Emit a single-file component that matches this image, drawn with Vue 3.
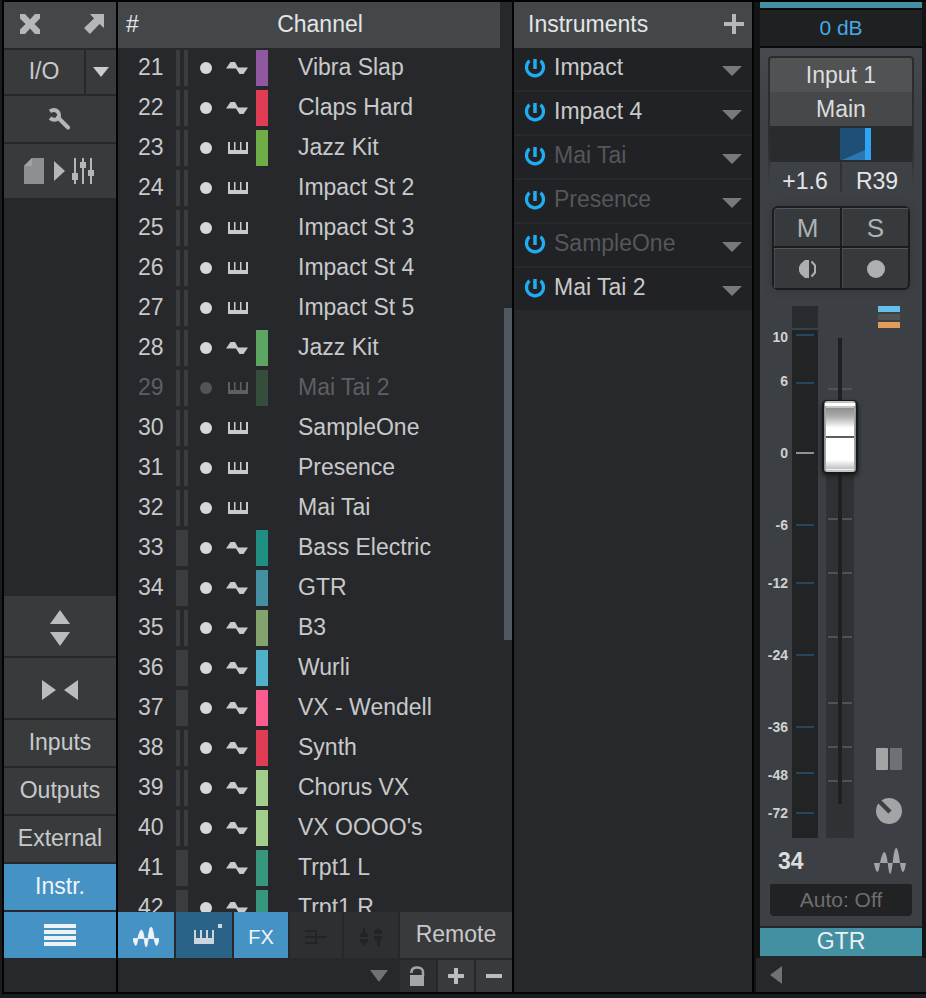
<script setup>
import { ref } from 'vue'

const fader = ref(795)
const pan = ref(39)

// [number, name, icon, colour, stereo, dimmed]
const channels = [
  [21, 'Vibra Slap', 'wave', '#9158a2', true],
  [22, 'Claps Hard', 'wave', '#e03d54', true],
  [23, 'Jazz Kit', 'keys', '#6fae46', true],
  [24, 'Impact St 2', 'keys', null, true],
  [25, 'Impact St 3', 'keys', null, true],
  [26, 'Impact St 4', 'keys', null, true],
  [27, 'Impact St 5', 'keys', null, true],
  [28, 'Jazz Kit', 'wave', '#5ca562', true],
  [29, 'Mai Tai 2', 'keys', '#364d3c', true, true],
  [30, 'SampleOne', 'keys', null, true],
  [31, 'Presence', 'keys', null, true],
  [32, 'Mai Tai', 'keys', null, true],
  [33, 'Bass Electric', 'wave', '#218e84', false],
  [34, 'GTR', 'wave', '#4290a2', false],
  [35, 'B3', 'wave', '#83a26d', true],
  [36, 'Wurli', 'wave', '#4fb0c9', false],
  [37, 'VX - Wendell', 'wave', '#fb5c8e', false],
  [38, 'Synth', 'wave', '#e03d54', true],
  [39, 'Chorus VX', 'wave', '#a1cf8b', true],
  [40, "VX OOOO's", 'wave', '#a1cf8b', true],
  [41, 'Trpt1 L', 'wave', '#36967e', false],
  [42, 'Trpt1 R', 'wave', '#36967e', false],
].map(([num, name, icon, color, stereo, dim]) => ({ num, name, icon, color, stereo, dim }))

const instruments = [
  { name: 'Impact' },
  { name: 'Impact 4' },
  { name: 'Mai Tai', off: true },
  { name: 'Presence', off: true },
  { name: 'SampleOne', off: true },
  { name: 'Mai Tai 2' },
]

const wavePath =
  'M0 15H6C5.500 19.500 4.500 24 3.500 24S.8 20 0 15ZM6 15C7.500 8 9 4 10.300 4S13 8 13.700 15ZM13.700 15H18.700C18 20 17.200 26 16.200 26S14.300 20 13.700 15ZM18.700 15C19.500 6 20.800 0 22.200 0S25 6 26 15ZM26 15H32C31.200 20 30.200 24 29 24S26.800 20 26 15Z'

// Positions along the meter, in percent of its height
const pct = (y) => ((y / 532) * 100).toFixed(3) + '%'
const scale = [
  ['10', 31, 29], ['6', 75, 77], ['0', 147, 147], ['-6', 219, 219], ['-12', 277, 277],
  ['-24', 349, 349], ['-36', 421, 421], ['-48', 469, 467], ['-72', 507, 507],
].map(([label, text, mark]) => ({ label, text: pct(text), mark: pct(mark) }))
const ticks = [83, 213, 267, 331, 397, 441, 475].map(pct)
</script>

<template>
  <main class="mixer">
    <nav class="side" aria-label="Console">
      <div class="side-head">
        <button aria-label="Close">
          <svg width="20" height="20" viewBox="0 0 20 20"><path d="M0 0H5L10 5.500 15 0H20V4.500L14.500 10 20 15.500V20H15L10 14.500 5 20H0V15.500L5.500 10 0 4.500Z" fill="#b5b7b8" /></svg>
        </button>
        <button aria-label="Detach">
          <svg width="20" height="20" viewBox="0 0 20 20"><path d="M6 0H20V14L15.500 10 6 20 0 14 10 4.500Z" fill="#b5b7b8" /></svg>
        </button>
      </div>
      <div class="split">
        <button class="btn txt io">I/O</button>
        <button class="btn io-menu" aria-label="I/O menu">
          <svg width="16" height="10" viewBox="0 0 16 10"><path d="M0 0H16L8 10Z" fill="#cbccce" /></svg>
        </button>
      </div>
      <button class="btn" aria-label="Options">
        <svg width="22" height="22" viewBox="0 0 22 22" fill="none" stroke="#b5b6b7" stroke-width="4">
          <path d="M1 3.500C3.500 1.500 6.500 1.500 8.500 3.500S10.500 8.500 8.800 10.300 4 12.500 1 10" />
          <path d="M9 9.500 19 19.500" stroke-linecap="round" />
        </svg>
      </button>
      <button class="btn scene" aria-label="Scenes">
        <svg width="72" height="28" viewBox="0 0 72 28">
          <path d="M0 9 8 1H20V27H0Z" fill="#8d8f91" />
          <path d="M0 9 8 1V9Z" fill="#a2a3a4" />
          <path d="M30 4 41 14 30 24Z" fill="#b5b6b7" />
          <path d="M50 1h2v15h2v7h-2v4h-2v-4h-2v-7h2ZM58 1h2v4h2v6h-2v16h-2V11h-2V5h2ZM66 1h2v12h2v6h-2v8h-2v-8h-2v-6h2Z" fill="#b5b6b7" />
        </svg>
      </button>
      <div class="spacer"></div>
      <button class="btn tall" aria-label="Fold vertically">
        <svg width="20" height="36" viewBox="0 0 20 36"><path d="M10 0 20 14H0ZM0 22H20L10 36Z" fill="#bbbcbd" /></svg>
      </button>
      <button class="btn tall" aria-label="Narrow">
        <svg width="36" height="20" viewBox="0 0 36 20"><path d="M0 0 14 10 0 20ZM36 0V20L22 10Z" fill="#bbbcbd" /></svg>
      </button>
      <button class="btn txt">Inputs</button>
      <button class="btn txt">Outputs</button>
      <button class="btn txt">External</button>
      <button class="btn txt on">Instr.</button>
      <button class="btn on" aria-label="Channel list">
        <svg width="32" height="22" viewBox="0 0 32 22"><path d="M0 0H32V4H0ZM0 6H32V10H0ZM0 12H32V16H0ZM0 18H32V22H0Z" fill="#eef2f5" /></svg>
      </button>
      <div class="side-foot"></div>
    </nav>

    <section class="list">
      <div class="list-body">
        <div class="rows">
          <table>
            <colgroup>
              <col class="w-num" /><col class="w-meter" /><col class="w-dot" /><col class="w-icon" /><col class="w-color" /><col />
            </colgroup>
            <thead>
              <tr><th class="c-num">#</th><th class="c-title" colspan="5">Channel</th></tr>
            </thead>
            <tbody>
              <tr v-for="c in channels" :key="c.num" :class="{ dim: c.dim }">
                <td class="c-num">{{ c.num }}</td>
                <td><span :class="['lanes', { mono: !c.stereo }]"></span></td>
                <td><span class="dot"></span></td>
                <td>
                  <svg v-if="c.icon === 'wave'" width="22" height="12" viewBox="0 0 22 12"><path d="M0 6.500 4.500 0H9L12 5.500H22L17.500 12H13.500L10 6.500Z" fill="currentColor" /></svg>
                  <svg v-else class="keys" width="20" height="12" viewBox="0 0 20 12"><path d="M0 0H2V8H6V0H7.500V8H12V0H13.500V8H18V0H20V12H0Z" fill="currentColor" /></svg>
                </td>
                <td><span class="chip" :style="{ background: c.color || 'transparent' }"></span></td>
                <td class="c-name">{{ c.name }}</td>
              </tr>
            </tbody>
          </table>
        </div>
        <div class="scroll"><span class="thumb"></span></div>
      </div>
      <div class="tools">
        <button class="btn on t56 low" aria-label="Audio tracks">
          <svg width="26" height="20" viewBox="0 0 32 26" preserveAspectRatio="none"><path :d="wavePath" fill="#f1f4f6" stroke="#f1f4f6" /></svg>
        </button>
        <button class="btn deep t56" aria-label="Instrument tracks">
          <svg width="36" height="24" viewBox="-8 0 36 24"><path d="M0 7H2V15H6V7H8V15H12V7H14V15H18V7H20V21H0ZM24 1H28V5H24Z" fill="#cbd6dd" /></svg>
        </button>
        <button class="btn on t54 low fx">FX</button>
        <button class="btn off t52 low" aria-label="Buses">
          <svg width="22" height="16" viewBox="0 0 22 16"><path d="M0 2H11V14H0M0 8H22" fill="none" stroke="#222427" stroke-width="2" /></svg>
        </button>
        <button class="btn off t54 low" aria-label="VCA">
          <svg width="22" height="18" viewBox="0 0 22 18"><path d="M3 0h2v4l3 2v3H0V6l3-2ZM0 11h8v3l-3 2v2H3v-2l-3-2ZM17 0h2v2h3v4h-8V2h3ZM14 8h8v3l-2 2v5h-3v-5l-3-2Z" fill="#222427" /></svg>
        </button>
        <button class="btn txt remote">Remote</button>
      </div>
      <div class="foot">
        <button class="plain" aria-label="More">
          <svg width="18" height="12" viewBox="0 0 18 12"><path d="M0 0H18L9 12Z" fill="#707275" /></svg>
        </button>
        <button class="btn off t36" aria-label="Lock">
          <svg width="16" height="20" viewBox="0 0 16 20"><path d="M0 9H14V20H0Z" fill="#a5a6a7" /><path d="M1.500 7V5.500C2 2 4 1.500 7 1.500S13 3 13 6V10" fill="none" stroke="#a5a6a7" stroke-width="2.500" /></svg>
        </button>
        <button class="btn t36" aria-label="Add">
          <svg width="16" height="16" viewBox="0 0 16 16"><path d="M6 0H10V6H16V10H10V16H6V10H0V6H6Z" fill="#bcbdbe" /></svg>
        </button>
        <button class="btn t36" aria-label="Remove">
          <svg width="16" height="4" viewBox="0 0 16 4"><path d="M0 0H16V4H0Z" fill="#bcbdbe" /></svg>
        </button>
      </div>
    </section>

    <section class="instruments">
      <header>
        <h2>Instruments</h2>
        <button class="plain" aria-label="Add instrument">
          <svg width="20" height="20" viewBox="0 0 20 20"><path d="M8 0H12V8H20V12H12V20H8V12H0V8H8Z" fill="#b5b7b8" /></svg>
        </button>
      </header>
      <ul>
        <li v-for="i in instruments" :key="i.name" :class="{ off: i.off }">
          <button class="plain power" :aria-label="'Power ' + i.name">
            <svg width="22" height="20" viewBox="0 0 22 20">
              <path d="M5.500 2.800A8.500 8.500 0 1 0 16.500 2.800" fill="none" stroke="#20adf2" stroke-width="3.200" />
              <path d="M11 1V11" stroke="#20adf2" stroke-width="3.500" />
            </svg>
          </button>
          <span class="iname">{{ i.name }}</span>
          <button class="plain arrow" :aria-label="'Menu ' + i.name">
            <svg width="20" height="10" viewBox="0 0 20 10"><path d="M0 0H20L10 10Z" fill="#77797a" /></svg>
          </button>
        </li>
      </ul>
    </section>

    <section class="strip-col">
      <div class="strip-wrap">
        <article class="strip">
          <div class="cap"></div>
          <div class="peak">0 dB</div>
          <div class="body">
            <div class="routing">
              <button class="route in">Input 1</button>
              <button class="route out">Main</button>
              <div class="pan">
                <svg viewBox="0 0 142 32" preserveAspectRatio="none" aria-hidden="true">
                  <path d="M70 0H95V32H70Z" fill="#1f4f74" /><path d="M72 32 95 22V32Z" fill="#2b78b1" />
                </svg>
                <input v-model="pan" type="range" min="-100" max="100" aria-label="Pan" />
              </div>
              <div class="values"><span>+1.6</span><span>R39</span></div>
            </div>
            <div class="pads">
              <button>M</button>
              <button>S</button>
              <button aria-label="Monitor">
                <svg width="18" height="18" viewBox="0 0 18 18"><path d="M10 0V18H6L1.500 14 0 11V7L1.500 4 6 0Z" fill="#adb0b3" /><path d="M12.500 1.500 16 5.500V12.500L12.500 16.500" fill="none" stroke="#adb0b3" stroke-width="2" /></svg>
              </button>
              <button aria-label="Record">
                <svg width="18" height="18" viewBox="0 0 18 18"><circle cx="9" cy="9" r="9" fill="#adb0b3" /></svg>
              </button>
            </div>
            <div class="level">
              <div class="labels"><span v-for="s in scale" :key="s.label" :style="{ top: s.text }">{{ s.label }}</span></div>
              <div class="meter">
                <div class="clip"></div>
                <div class="bar"></div>
                <i v-for="s in scale" :key="s.label" :class="{ zero: s.label === '0' }" :style="{ top: s.mark }"></i>
              </div>
              <div class="fader">
                <div class="groove"></div>
                <i v-for="t in ticks" :key="t" :style="{ top: t }"></i>
                <div class="slot"></div>
                <input v-model="fader" type="range" min="0" max="1000" aria-label="Volume" />
              </div>
              <div class="icons">
                <svg width="22" height="22" viewBox="0 0 22 22"><path d="M0 0H22V6H0Z" fill="#66beed" /><path d="M0 8H22V14H0Z" fill="#505254" /><path d="M0 16H22V22H0Z" fill="#e09d58" /></svg>
                <span class="spacer"></span>
                <svg width="26" height="22" viewBox="0 0 26 22"><rect width="12" height="22" rx="1" fill="#a2a4a6" /><rect x="14" width="12" height="22" rx="1" fill="#6e7175" /></svg>
                <svg class="knob" width="26" height="26" viewBox="0 0 26 26"><circle cx="13" cy="13" r="13" fill="#a2a4a6" /><path d="M3 3 14 14" stroke="#3c3f44" stroke-width="4.500" /></svg>
              </div>
            </div>
            <div class="ident">
              <strong>34</strong>
              <svg width="32" height="26" viewBox="0 0 32 26"><path :d="wavePath" fill="#a2a4a6" /></svg>
            </div>
            <button class="auto">Auto: Off</button>
          </div>
          <div class="name">GTR</div>
        </article>
      </div>
      <footer>
        <button class="plain" aria-label="Scroll left">
          <svg width="12" height="18" viewBox="0 0 12 18"><path d="M12 0V18L0 9Z" fill="#707275" /></svg>
        </button>
      </footer>
    </section>
  </main>
</template>

<style>
body {
  margin: 0;
  background: #1b1c1f;
}
</style>

<style scoped>
* {
  box-sizing: border-box;
}
.mixer {
  height: calc(100vh - 4px);
  min-height: 800px;
  display: grid;
  grid-template-columns: 112px minmax(340px, 394fr) minmax(200px, 238fr) 172px;
  gap: 2px;
  padding: 2px 0 2px 2px;
  margin-left: 2px;
  background: #020303;
  color: #c8c9ca;
  font: 23px/26px "Liberation Sans", Arial, sans-serif;
}
svg {
  display: block;
}
button {
  border: 0;
  padding: 0;
  margin: 0;
  background: none;
  color: inherit;
  font: inherit;
  display: flex;
  align-items: center;
  justify-content: center;
}
.spacer {
  flex: 1;
}
.btn {
  height: 46px;
  background: #393a3c;
  flex: none;
}
.btn.on {
  background: #4592c5;
  color: #f1f4f6;
}
.btn.deep {
  background: #2a6288;
}
.btn.off {
  background: #2d3032;
}
.txt {
  padding-bottom: 2px;
}

.side {
  background: #27282c;
  display: flex;
  flex-direction: column;
  gap: 2px;
}
.side-head {
  height: 46px;
  background: #434749;
  display: flex;
  justify-content: space-between;
  padding: 0 12px 2px 16px;
}
.split {
  display: flex;
  gap: 2px;
}
.io {
  flex: 1;
  height: 44px;
}
.io-menu {
  width: 30px;
  height: 44px;
}
.scene {
  height: 54px;
}
.tall {
  height: 60px;
  padding-top: 4px;
}
.side-foot {
  height: 32px;
}

.list {
  background: #27282c;
  display: flex;
  flex-direction: column;
  min-height: 0;
}
.list-body {
  flex: 1;
  min-height: 0;
  display: flex;
}
.rows {
  flex: 1;
  overflow: hidden;
}
table {
  width: 100%;
  border-collapse: collapse;
  table-layout: fixed;
}
th {
  height: 46px;
  padding: 0 0 2px;
  background: #434749;
  color: #e4e5e6;
  font-weight: 400;
  text-align: center;
}
td {
  height: 40px;
  padding: 0;
  white-space: nowrap;
}
.w-num {
  width: 58px;
}
.w-meter {
  width: 20px;
}
.w-dot,
.w-icon {
  width: 30px;
}
.w-color {
  width: 42px;
}
.c-num {
  padding: 0 0 2px 20px;
  text-align: left;
}
th.c-num {
  padding-left: 8px;
}
th.c-title {
  padding-right: 36px;
}
.c-name {
  padding-bottom: 2px;
}
.lanes {
  display: block;
  width: 12px;
  height: 36px;
  border: solid #3b3c40;
  border-width: 0 4px;
}
.mono {
  background: #3b3c40;
}
.dot {
  display: block;
  width: 12px;
  height: 12px;
  margin-left: 4px;
  border-radius: 50%;
  background: #d6d7d8;
}
.keys {
  margin-left: 2px;
}
.chip {
  display: block;
  width: 12px;
  height: 36px;
}
.dim {
  color: #5e5f62;
}
.dim .dot {
  background: #535457;
}
.scroll {
  width: 12px;
  padding-left: 4px;
  display: grid;
  grid-template-rows: 306fr 332fr 272fr;
}
.thumb {
  grid-row: 2;
  background: #525860;
}
.tools,
.foot {
  display: flex;
  gap: 2px;
}
.foot {
  padding-top: 2px;
  justify-content: flex-end;
}
.foot .btn {
  height: 32px;
}
.foot .plain {
  margin-right: 10px;
}
.t36 {
  width: 36px;
}
.t52 {
  width: 52px;
}
.t54 {
  width: 54px;
}
.t56 {
  width: 56px;
}
.low {
  padding-top: 4px;
}
.fx {
  font-size: 20px;
}
.remote {
  flex: 1;
}

.instruments {
  background: #27282c;
}
.instruments header {
  height: 46px;
  padding: 0 8px 2px 14px;
  display: flex;
  justify-content: space-between;
  align-items: center;
  background: #434749;
}
h2 {
  margin: 0;
  font: inherit;
  color: #e4e5e6;
}
ul {
  list-style: none;
  margin: 0;
  padding: 0;
}
li {
  height: 44px;
  display: flex;
  align-items: center;
  padding: 0 10px 4px;
  border-bottom: 2px solid #27292c;
  background: #212225;
}
.iname {
  flex: 1;
  padding-left: 8px;
}
.off .iname {
  color: #555759;
}
.power {
  padding-top: 2px;
}
.arrow {
  padding-top: 8px;
}

.strip-col {
  display: flex;
  flex-direction: column;
  background: #131416;
}
.strip-wrap {
  flex: 1;
  display: flex;
  padding: 0 4px 0 6px;
}
.strip {
  flex: 1;
  display: flex;
  flex-direction: column;
}
.cap {
  height: 6px;
  background: #4290a2;
}
.peak {
  height: 40px;
  padding-top: 4px;
  border: solid #090a0b;
  border-width: 2px 0;
  background: #1f2022;
  color: #46a9e4;
  font-size: 21px;
  line-height: 28px;
  text-align: center;
}
.body {
  flex: 1;
  display: flex;
  flex-direction: column;
  padding: 8px 8px 10px;
  background: linear-gradient(#464a4e, #3e4146 60px, #3c3f44 300px);
}
.routing {
  padding: 2px 2px 0;
  border-radius: 4px 4px 0 0;
  background: linear-gradient(#2a2c2e, #2c2f32 90px, #3d4045 130px);
}
.route {
  width: 100%;
  height: 34px;
  color: #dcddde;
}
.in {
  background: #505254;
  border-radius: 2px 2px 0 0;
}
.out {
  background: #474849;
}
.pan {
  height: 36px;
  padding: 2px 0;
  display: grid;
  background: #282c2f;
}
.pan > * {
  grid-area: 1 / 1;
  width: 100%;
  height: 32px;
}
input[type='range'] {
  appearance: none;
  margin: 0;
  background: transparent;
}
.pan input::-webkit-slider-thumb {
  appearance: none;
  width: 6px;
  height: 32px;
  background: #31a3f3;
}
.values {
  display: grid;
  grid-template-columns: 1fr 1fr;
  gap: 2px;
  background: linear-gradient(#2e3134, #303336);
  height: 30px;
  color: #e4e5e6;
}
.values span {
  background: #3d4045;
  text-align: center;
  padding-top: 6px;
}
.pads {
  display: grid;
  grid-template-columns: 1fr 1fr;
  grid-template-rows: 38px 40px;
  gap: 2px;
  margin: 14px 4px 16px;
  padding: 2px;
  border-radius: 6px;
  background: #1a1c1e;
  box-shadow: 0 0 8px #33363a;
}
.pads button {
  background: #363a3d;
  border-top: 1px solid #54575a;
  border-left: 1px solid #4a4d50;
  color: #adb0b3;
  font-size: 26px;
}
.pads button:first-child {
  border-top-left-radius: 4px;
}
.pads button:last-child {
  border-bottom-right-radius: 4px;
}
.level {
  flex: 1;
  display: flex;
}
.labels {
  position: relative;
  width: 20px;
  margin-right: 4px;
}
.labels span {
  position: absolute;
  right: 0;
  transform: translateY(-50%);
  font: bold 14px/16px "Liberation Sans", Arial, sans-serif;
  color: #cfd1d2;
}
.meter {
  position: relative;
  width: 26px;
  display: flex;
  flex-direction: column;
  gap: 2px;
}
.clip {
  height: 22px;
  background: #292c2e;
}
.bar {
  flex: 1;
  background: #222325;
}
i {
  position: absolute;
  left: 4px;
  width: 18px;
  height: 2px;
  margin-top: -1px;
  background: #234761;
}
.zero {
  background: #8594a0;
}
.fader {
  position: relative;
  width: 36px;
  margin-left: 4px;
  display: grid;
  grid-template-columns: 4px 12px 4px 12px 4px;
  grid-template-rows: 32fr 99fr 367fr 34fr;
}
.groove {
  grid-area: 3 / 2 / 5 / 5;
  background: #2f3235;
}
.slot {
  grid-area: 2 / 3 / 4 / 4;
  background: #1f2022;
  position: relative;
}
.fader i {
  left: 6px;
  width: 24px;
  background: #505357;
}
.fader input {
  grid-area: 1 / 1 / 5 / 6;
  position: relative;
  width: 36px;
  height: 100%;
  writing-mode: vertical-lr;
  direction: rtl;
}
.fader input::-webkit-slider-thumb {
  appearance: none;
  width: 36px;
  height: 74px;
  border: 2px solid #17181a;
  border-top-width: 1px;
  border-radius: 5px;
  background:
    linear-gradient(#fff, #fff) 50% 2px / 30px 3px no-repeat,
    linear-gradient(#5d5d5d, #5d5d5d) 50% 35px / 28px 2px no-repeat,
    linear-gradient(#eee, #eee) 50% 68px / 28px 1px no-repeat,
    linear-gradient(#8f8f8f, #aaa 8px, #fff 20px, #fff 52px, #c8c8c8 60px) 50% 7px / 28px 60px no-repeat,
    linear-gradient(90deg, #8a8a8a, #c4c4c4 3px, #c4c4c4 29px, #8a8a8a);
  box-shadow: 0 2px 4px #1c1d1f;
}
.icons {
  flex: 1;
  display: flex;
  flex-direction: column;
  align-items: center;
  padding: 0 0 14px 6px;
}
.knob {
  margin-top: 28px;
}
.ident {
  height: 46px;
  display: flex;
  align-items: center;
  justify-content: space-between;
  padding: 0 8px 0 10px;
  color: #dcddde;
}
.auto {
  height: 32px;
  margin: 0 2px;
  border-radius: 2px 2px 4px 4px;
  background: #212224;
  color: #6d6e70;
  font-size: 21px;
}
.name {
  height: 32px;
  border: solid #25272a;
  border-width: 2px 0;
  background: #4290a2;
  color: #eef1f2;
  text-align: center;
}
.strip-col footer {
  height: 34px;
  margin-left: 2px;
  padding-left: 14px;
  display: flex;
  align-items: center;
  background: #27282c;
}
</style>
